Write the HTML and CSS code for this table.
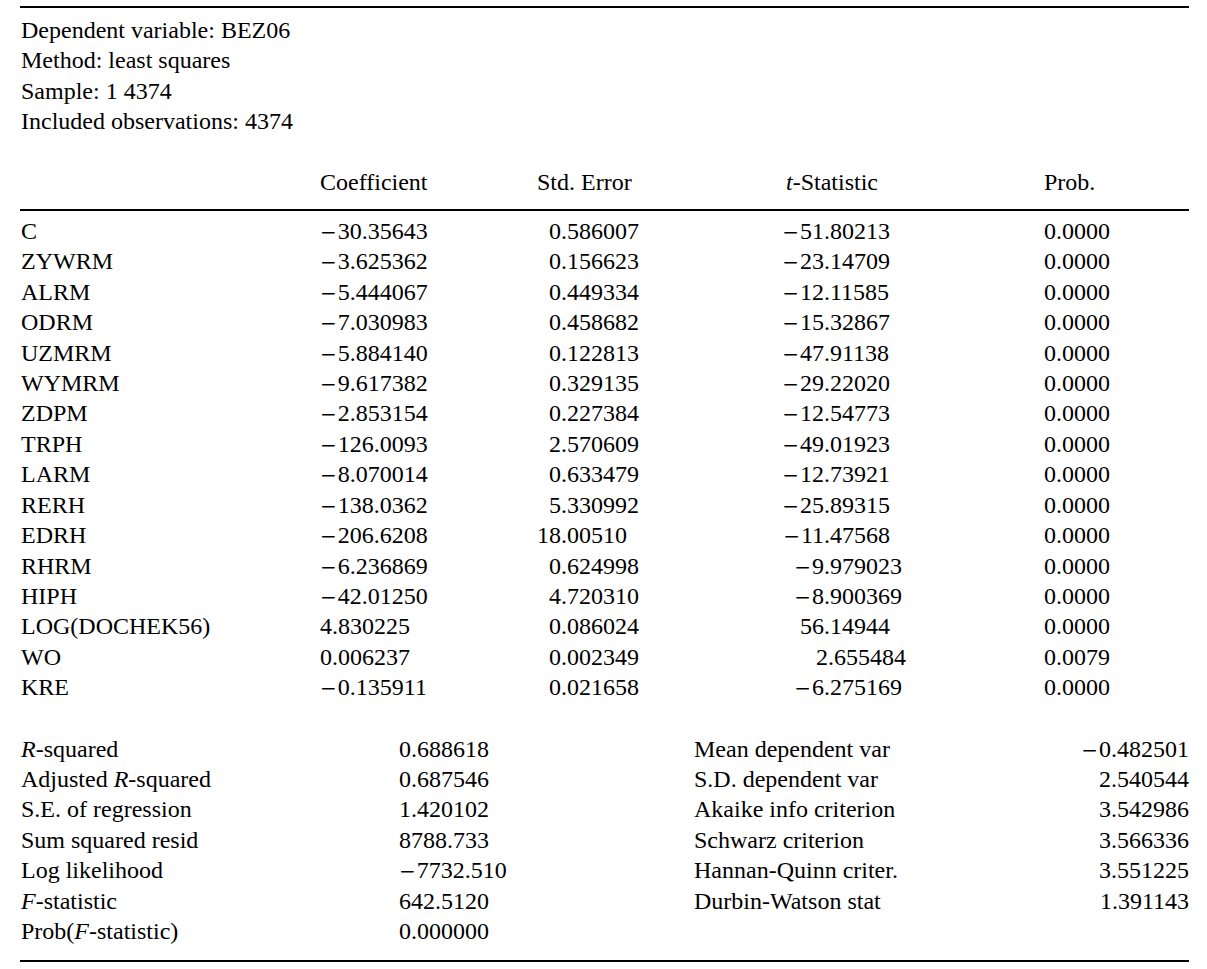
FILE: index.html
```html
<!DOCTYPE html>
<html>
<head>
<meta charset="utf-8">
<link rel="stylesheet" href="styles.css">
</head>
<body>
<div class="page">
  <div class="rule rule-top"></div>
  <div class="info">
    <div>Dependent variable: BEZ06</div>
    <div>Method: least squares</div>
    <div>Sample: 1 4374</div>
    <div>Included observations: 4374</div>
  </div>

  <div class="coef-head">
    <div></div>
    <div class="h-coef">Coefficient</div>
    <div class="h-se">Std. Error</div>
    <div class="h-t"><i>t</i>-Statistic</div>
    <div class="h-p">Prob.</div>
  </div>
  <div class="rule rule-mid"></div>

  <div class="coef-body">
    <div>C</div><div><span class="m">−</span>30.35643</div><div class="se"><span class="i">0</span>.586007</div><div class="ts"><span class="i"><span class="m">−</span>51</span>.80213</div><div>0.0000</div>
    <div>ZYWRM</div><div><span class="m">−</span>3.625362</div><div class="se"><span class="i">0</span>.156623</div><div class="ts"><span class="i"><span class="m">−</span>23</span>.14709</div><div>0.0000</div>
    <div>ALRM</div><div><span class="m">−</span>5.444067</div><div class="se"><span class="i">0</span>.449334</div><div class="ts"><span class="i"><span class="m">−</span>12</span>.11585</div><div>0.0000</div>
    <div>ODRM</div><div><span class="m">−</span>7.030983</div><div class="se"><span class="i">0</span>.458682</div><div class="ts"><span class="i"><span class="m">−</span>15</span>.32867</div><div>0.0000</div>
    <div>UZMRM</div><div><span class="m">−</span>5.884140</div><div class="se"><span class="i">0</span>.122813</div><div class="ts"><span class="i"><span class="m">−</span>47</span>.91138</div><div>0.0000</div>
    <div>WYMRM</div><div><span class="m">−</span>9.617382</div><div class="se"><span class="i">0</span>.329135</div><div class="ts"><span class="i"><span class="m">−</span>29</span>.22020</div><div>0.0000</div>
    <div>ZDPM</div><div><span class="m">−</span>2.853154</div><div class="se"><span class="i">0</span>.227384</div><div class="ts"><span class="i"><span class="m">−</span>12</span>.54773</div><div>0.0000</div>
    <div>TRPH</div><div><span class="m">−</span>126.0093</div><div class="se"><span class="i">2</span>.570609</div><div class="ts"><span class="i"><span class="m">−</span>49</span>.01923</div><div>0.0000</div>
    <div>LARM</div><div><span class="m">−</span>8.070014</div><div class="se"><span class="i">0</span>.633479</div><div class="ts"><span class="i"><span class="m">−</span>12</span>.73921</div><div>0.0000</div>
    <div>RERH</div><div><span class="m">−</span>138.0362</div><div class="se"><span class="i">5</span>.330992</div><div class="ts"><span class="i"><span class="m">−</span>25</span>.89315</div><div>0.0000</div>
    <div>EDRH</div><div><span class="m">−</span>206.6208</div><div class="se"><span class="i">18</span>.00510</div><div class="ts"><span class="i"><span class="m">−</span>11</span>.47568</div><div>0.0000</div>
    <div>RHRM</div><div><span class="m">−</span>6.236869</div><div class="se"><span class="i">0</span>.624998</div><div class="ts"><span class="i"><span class="m">−</span>9</span>.979023</div><div>0.0000</div>
    <div>HIPH</div><div><span class="m">−</span>42.01250</div><div class="se"><span class="i">4</span>.720310</div><div class="ts"><span class="i"><span class="m">−</span>8</span>.900369</div><div>0.0000</div>
    <div>LOG(DOCHEK56)</div><div>4.830225</div><div class="se"><span class="i">0</span>.086024</div><div class="ts"><span class="i">56</span>.14944</div><div>0.0000</div>
    <div>WO</div><div>0.006237</div><div class="se"><span class="i">0</span>.002349</div><div class="ts"><span class="i pos">2</span>.655484</div><div>0.0079</div>
    <div>KRE</div><div><span class="m">−</span>0.135911</div><div class="se"><span class="i">0</span>.021658</div><div class="ts"><span class="i"><span class="m">−</span>6</span>.275169</div><div>0.0000</div>
  </div>

  <div class="stats">
    <div><i>R</i>-squared</div><div>0.688618</div><div>Mean dependent var</div><div class="rv"><span class="m">−</span>0.482501</div>
    <div>Adjusted <i>R</i>-squared</div><div>0.687546</div><div>S.D. dependent var</div><div class="rv">2.540544</div>
    <div>S.E. of regression</div><div>1.420102</div><div>Akaike info criterion</div><div class="rv">3.542986</div>
    <div>Sum squared resid</div><div>8788.733</div><div>Schwarz criterion</div><div class="rv">3.566336</div>
    <div>Log likelihood</div><div><span class="m">−</span>7732.510</div><div>Hannan-Quinn criter.</div><div class="rv">3.551225</div>
    <div><i>F</i>-statistic</div><div>642.5120</div><div>Durbin-Watson stat</div><div class="rv">1.391143</div>
    <div>Prob(<i>F</i>-statistic)</div><div>0.000000</div><div></div><div></div>
  </div>
  <div class="rule rule-bottom"></div>
</div>
</body>
</html>
```

FILE: styles.css
```css
html, body {
  margin: 0;
  padding: 0;
  background: #ffffff;
}

body {
  font-family: "Liberation Serif", "Times New Roman", serif;
  font-size: 24px;
  line-height: 30.4px;
  color: #000000;
}

.page {
  width: 1169px;
  margin-left: 20px;
  padding-top: 6px;
}

.rule {
  height: 2px;
  background: #000000;
}

.info {
  margin-top: 7px;
  padding-left: 1px;
}

.coef-head,
.coef-body {
  display: grid;
  grid-template-columns: 299px 200px 240px 284px 1fr;
  padding-left: 1px;
}

.coef-head {
  margin-top: 30px;
  margin-bottom: 12px;
}

.h-se { padding-left: 17px; }
.h-t { padding-left: 26px; }

.coef-body {
  margin-top: 5px;
}

.se .i {
  display: inline-block;
  width: 41px;
  text-align: right;
}

.ts .i {
  display: inline-block;
  width: 64px;
  text-align: right;
}

.ts .i.pos {
  width: 68px;
}

.m {
  font-family: "DejaVu Serif", "Liberation Serif", serif;
  font-size: 20px;
  line-height: 1;
  padding-right: 1px;
}

.stats {
  display: grid;
  grid-template-columns: 378px 295px 1fr auto;
  margin-top: 31px;
  padding-left: 1px;
}

.rv {
  text-align: right;
}

.rule-bottom {
  margin-top: 14px;
}
```
